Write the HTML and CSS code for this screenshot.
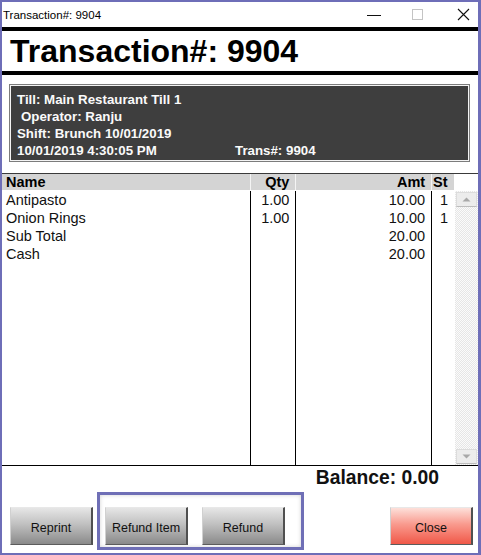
FILE: index.html
```html
<!DOCTYPE html>
<html>
<head>
<meta charset="utf-8">
<link rel="stylesheet" href="styles.css">
</head>
<body>
<div class="window">
  <div class="titlebar">
    <span class="title">Transaction#: 9904</span>
    <div class="controls">
      <span class="ctl min"><svg width="16" height="12" viewBox="0 0 16 12"><line x1="1" y1="6.5" x2="15" y2="6.5" stroke="#111" stroke-width="1"/></svg></span>
      <span class="ctl max"><svg width="12" height="12" viewBox="0 0 12 12"><rect x="0.5" y="0.5" width="10" height="10" fill="none" stroke="#c4c4c4" stroke-width="1"/></svg></span>
      <span class="ctl close"><svg width="13" height="13" viewBox="0 0 13 13"><path d="M1 1 L12 12 M12 1 L1 12" stroke="#111" stroke-width="1.1" fill="none"/></svg></span>
    </div>
  </div>
  <div class="heading">Transaction#: 9904</div>
  <div class="infobox">
    <div class="line">Till: Main Restaurant Till 1</div>
    <div class="line indent">Operator: Ranju</div>
    <div class="line">Shift: Brunch 10/01/2019</div>
    <div class="line split"><span class="dt">10/01/2019 4:30:05 PM</span><span>Trans#: 9904</span></div>
  </div>
  <div class="grid">
    <div class="ghead">
      <div class="hc c-name">Name</div>
      <div class="hc c-qty">Qty</div>
      <div class="hc c-amt">Amt</div>
      <div class="hc c-st">St</div>
      <div class="hc c-sb"></div>
    </div>
    <div class="gbody">
      <div class="col c-name">
        <div class="cell">Antipasto</div>
        <div class="cell">Onion Rings</div>
        <div class="cell">Sub Total</div>
        <div class="cell">Cash</div>
      </div>
      <div class="col c-qty">
        <div class="cell">1.00</div>
        <div class="cell">1.00</div>
      </div>
      <div class="col c-amt">
        <div class="cell">10.00</div>
        <div class="cell">10.00</div>
        <div class="cell">20.00</div>
        <div class="cell">20.00</div>
      </div>
      <div class="col c-st">
        <div class="cell">1</div>
        <div class="cell">1</div>
      </div>
      <div class="scrollbar">
        <div class="sbtn"><svg width="9" height="5" viewBox="0 0 9 5"><path d="M0.5 4.5 L4.5 0.5 L8.5 4.5 Z" fill="#a8a8a8"/></svg></div>
        <div class="track"></div>
        <div class="sbtn"><svg width="9" height="5" viewBox="0 0 9 5"><path d="M0.5 0.5 L4.5 4.5 L8.5 0.5 Z" fill="#a8a8a8"/></svg></div>
      </div>
    </div>
  </div>
  <div class="balance">Balance: 0.00</div>
  <div class="footer">
    <button class="btn reprint">Reprint</button>
    <div class="highlight">
      <button class="btn">Refund Item</button>
      <button class="btn">Refund</button>
    </div>
    <button class="btn closebtn">Close</button>
  </div>
</div>
</body>
</html>
```

FILE: styles.css
```css
html, body {
  margin: 0;
  padding: 0;
  background: #ffffff;
}

.window {
  width: 481px;
  height: 555px;
  box-sizing: border-box;
  border: 2px solid #6e6eb8;
  border-right-width: 3px;
  background: #ffffff;
  font-family: "Liberation Sans", Arial, sans-serif;
  color: #111;
  display: flex;
  flex-direction: column;
  overflow: hidden;
}

.titlebar {
  height: 25px;
  display: flex;
  align-items: center;
  justify-content: space-between;
  flex-shrink: 0;
}

.title {
  font-size: 11.5px;
  padding-left: 1px;
  color: #000;
}

.controls {
  display: flex;
  align-items: center;
  height: 25px;
}

.ctl {
  display: flex;
  align-items: center;
  justify-content: center;
}

.ctl.min { width: 16px; margin-right: 30px; }
.ctl.max { width: 12px; margin-right: 33px; }
.ctl.close { width: 13px; margin-right: 8px; }

.heading {
  border-top: 4px solid #000;
  border-bottom: 4px solid #000;
  height: 40px;
  line-height: 40px;
  font-size: 32px;
  font-weight: bold;
  padding-left: 8px;
  color: #000;
  flex-shrink: 0;
}

.infobox {
  margin: 9px 8px 0 7px;
  border: 1px solid #7c7c7c;
  box-shadow: inset 0 0 0 1px #f4f4f4;
  background: #3e3e3e;
  padding: 6px 6px 2px 7px;
  color: #fafafa;
  font-size: 13.3px;
  font-weight: bold;
  flex-shrink: 0;
}

.infobox .line {
  height: 17px;
  line-height: 17px;
  white-space: pre;
}

.infobox .indent {
  padding-left: 4px;
}

.infobox .split {
  display: flex;
}

.infobox .dt {
  width: 218px;
}

.grid {
  margin-top: 11px;
  border-top: 1px solid #3a3a3a;
  flex-shrink: 0;
}

.ghead {
  display: flex;
  height: 16px;
}

.hc {
  background: #d4d4d4;
  font-size: 14.5px;
  font-weight: bold;
  line-height: 16px;
  box-sizing: border-box;
  border-right: 1px solid #f4f4f4;
  color: #000;
}

.hc.c-sb {
  background: #ffffff;
  border-right: none;
}

.c-name { width: 250px; padding-left: 4px; box-sizing: border-box; }
.c-qty { width: 45px; text-align: right; padding-right: 6px; box-sizing: border-box; }
.c-amt { width: 136px; text-align: right; padding-right: 6px; box-sizing: border-box; }
.c-st { width: 22px; box-sizing: border-box; }
.c-sb { width: 24px; }

.hc.c-st { padding-left: 1px; border-right: none; }

.gbody {
  display: flex;
  height: 276px;
  border-bottom: 1px solid #000;
  padding-top: 1px;
  box-sizing: border-box;
}

.col {
  border-right: 1px solid #000;
  height: 100%;
}

.col.c-st {
  border-right: none;
  text-align: right;
  padding-right: 6px;
}

.cell {
  height: 18px;
  line-height: 18px;
  font-size: 14.5px;
  color: #111;
  white-space: nowrap;
}

.scrollbar {
  width: 23px;
  margin-left: 1px;
  display: flex;
  flex-direction: column;
  background: repeating-conic-gradient(#e6e6e6 0 25%, #fbfbfb 0 50%) 0 0 / 2px 2px;
}

.sbtn {
  height: 15px;
  margin: 1px 1px 0 1px;
  background: #ececec;
  border: 1px solid #dcdcdc;
  border-bottom-color: #bdbdbd;
  display: flex;
  align-items: center;
  justify-content: center;
  box-sizing: border-box;
}

.sbtn:last-child {
  margin: 0 1px 1px 1px;
}

.track {
  flex: 1;
}

.balance {
  height: 24px;
  line-height: 24px;
  font-size: 19.3px;
  font-weight: bold;
  text-align: right;
  padding-right: 39px;
  color: #111;
  flex-shrink: 0;
}

.footer {
  display: flex;
  align-items: flex-start;
  padding-left: 8px;
  flex: 1;
}

.btn {
  width: 83px;
  height: 38px;
  box-sizing: border-box;
  font-family: "Liberation Sans", Arial, sans-serif;
  font-size: 12.5px;
  color: #111;
  padding: 3px 0 0 0;
  border: 1px solid #6a6a6a;
  border-top-color: #e8e8e8;
  border-left-color: #d0d0d0;
  border-right: 2px solid #505050;
  border-bottom-color: #5c5c5c;
  background: linear-gradient(#e6e6e6, #c0c0c0 45%, #8a8a8a);
}

.reprint {
  margin-top: 17px;
}

.highlight {
  margin-left: 4px;
  margin-top: 2px;
  width: 207px;
  height: 58px;
  box-sizing: border-box;
  border: 3px solid #6f6fb6;
  box-shadow: inset 0 0 4px rgba(0, 0, 0, 0.18);
  display: flex;
  gap: 14px;
  padding: 12px 0 0 5px;
}

.closebtn {
  margin-top: 17px;
  margin-left: auto;
  margin-right: 5px;
  background: linear-gradient(#fde0da, #f99a8e 45%, #f05848);
}
```
